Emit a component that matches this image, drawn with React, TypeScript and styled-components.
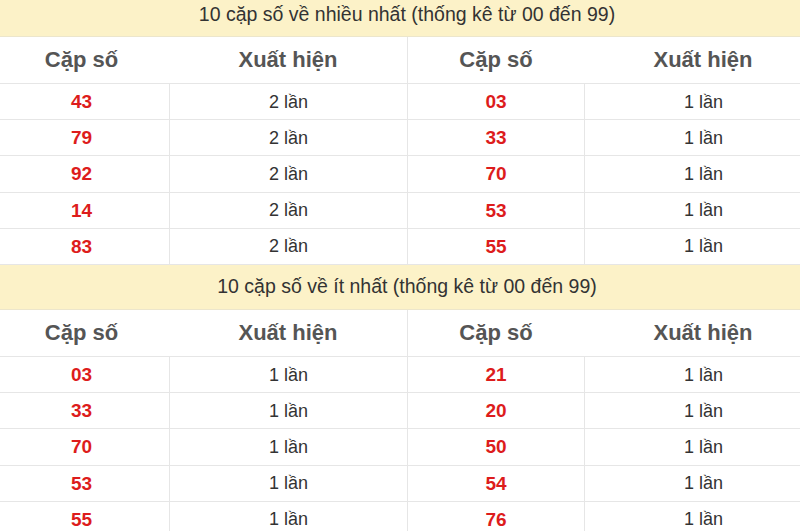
import styled, { createGlobalStyle } from "styled-components";

const GlobalStyle = createGlobalStyle`
    html, body {
        margin: 0;
        padding: 0;
        background: #fff;
        overflow: hidden;
    }
    body {
        font-family: "Liberation Sans", Arial, sans-serif;
    }
`

const Page = styled.div`
    width: 822px;
    margin-top: -8px;
`

const Title = styled.div`
    height: 45px;
    display: flex;
    align-items: center;
    justify-content: center;
    padding-right: 8px;
    background: #fcf2c8;
    border-bottom: 1px solid #ece6cc;
    box-sizing: border-box;
    color: #333;
    font-size: 19.5px;
`

const Grid = styled.div`
    display: grid;
    grid-template-columns: 169px 238px 177px 238px;
`

type CellProps = { $line?: boolean; $first?: boolean }

const HeadCell = styled.div<CellProps>`
    height: 47px;
    display: flex;
    align-items: center;
    justify-content: center;
    box-sizing: border-box;
    padding-right: ${p => p.$first ? "6px" : "0"};
    border-bottom: 1px solid #e6e6e6;
    border-left: ${p => p.$line ? "1px solid #e6e6e6" : "none"};
    color: #555;
    font-size: 22px;
    font-weight: 700;
`

const Cell = styled.div<CellProps>`
    height: 36.2px;
    display: flex;
    align-items: center;
    justify-content: center;
    box-sizing: border-box;
    padding-top: 1px;
    padding-right: ${p => p.$first ? "6px" : "0"};
    border-bottom: 1px solid #e6e6e6;
    border-left: ${p => p.$line ? "1px solid #e6e6e6" : "none"};
    color: #333;
    font-size: 18px;
`

const Num = styled(Cell)`
    color: #dd1c1c;
    font-weight: 700;
    font-size: 19px;
`

type Row = [string, string, string, string]

const Section = ({ title, rows }: { title: string; rows: Row[] }) => (
    <>
        <Title>{title}</Title>
        <Grid>
            <HeadCell $first>Cặp số</HeadCell>
            <HeadCell>Xuất hiện</HeadCell>
            <HeadCell $line>Cặp số</HeadCell>
            <HeadCell>Xuất hiện</HeadCell>
            {rows.map((r, i) => (
                <Row key={i} r={r} />
            ))}
        </Grid>
    </>
)

const Row = ({ r }: { r: Row }) => (
    <>
        <Num $first>{r[0]}</Num>
        <Cell $line>{r[1]}</Cell>
        <Num $line>{r[2]}</Num>
        <Cell $line>{r[3]}</Cell>
    </>
)

const most: Row[] = [
    ["43", "2 lần", "03", "1 lần"],
    ["79", "2 lần", "33", "1 lần"],
    ["92", "2 lần", "70", "1 lần"],
    ["14", "2 lần", "53", "1 lần"],
    ["83", "2 lần", "55", "1 lần"],
]

const least: Row[] = [
    ["03", "1 lần", "21", "1 lần"],
    ["33", "1 lần", "20", "1 lần"],
    ["70", "1 lần", "50", "1 lần"],
    ["53", "1 lần", "54", "1 lần"],
    ["55", "1 lần", "76", "1 lần"],
]

export default function App() {
    return (
        <>
            <GlobalStyle />
            <Page>
                <Section title="10 cặp số về nhiều nhất (thống kê từ 00 đến 99)" rows={most} />
                <Section title="10 cặp số về ít nhất (thống kê từ 00 đến 99)" rows={least} />
            </Page>
        </>
    )
}
